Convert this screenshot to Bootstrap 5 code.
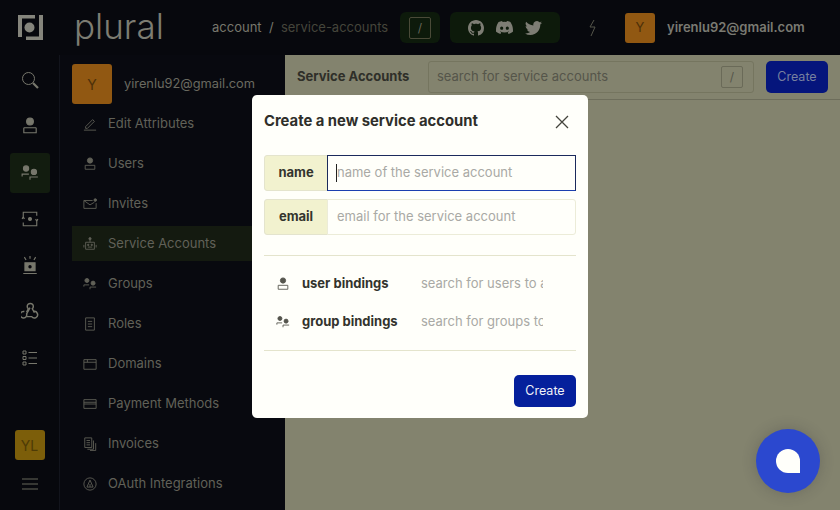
<!DOCTYPE html>
<html lang="en">
<head>
  <meta charset="UTF-8">
  <meta name="viewport" content="width=device-width, initial-scale=1.0">
  <title>Plural - Service Accounts</title>
  <link rel="stylesheet" href="https://cdn.jsdelivr.net/npm/bootstrap@5.3.0/dist/css/bootstrap.min.css">
  <style>
    body { font-family: "Inter", "Liberation Sans", sans-serif; background: #08090f; color: #77776c; overflow: hidden; }
    .app-frame { height: 510px; width: 840px; }
    .top-bar { height: 55px; padding-left: 18px; background: #07080d; }
    .logo-mark { width: 25px; height: 25px; color: #85857c; }
    .logo-word { font-size: 35px; font-weight: 300; line-height: 1; color: #7d7d72; width: 138px; margin-left: 31px; padding-bottom: 3px; }
    .crumbs { font-size: 13px; width: 188px; color: #77776c; white-space: nowrap; }
    .crumb-dim { color: #45453b; }
    .top-pill { background: #0d1a0b; border-radius: 6px; height: 31px; }
    .slash-pill { width: 40px; margin-right: 10px; }
    .social-pill { width: 110px; color: #7d7d74; }
    .slash-key { border: 1px solid #4a4a38; border-radius: 2px; width: 22px; height: 22px; font-size: 12px; color: #66665a; }
    .bolt-box { width: 65px; color: #55554a; }
    .avatar-sq { background: #915812; color: #4d3009; border-radius: 3px; }
    .avatar-top { width: 30px; height: 30px; font-size: 13px; }
    .top-email { font-size: 13px; font-weight: 600; color: #7a7a72; margin-left: 12px; }
    .work-area { height: 455px; }
    .rail { width: 60px; background: #07080d; border-right: 1px solid #12141c; padding-top: 5px; padding-bottom: 20px; }
    .rail-item { width: 40px; height: 40px; margin-bottom: 6.3px; border-radius: 3px; color: #77776c; }
    .rail-item.is-on { background: #121c0f; }
    .rail-yl { width: 30px; height: 30px; background: #7c5e0a; color: #4e3b06; font-size: 14px; border-radius: 3px; margin-bottom: 18px; }
    .side-menu { width: 225px; background: #08090f; }
    .side-head { height: 49px; padding: 9px 0 0 12px; font-size: 12.8px; color: #6a6a60; }
    .avatar-side { width: 40px; height: 40px; font-size: 14px; margin-right: 12px; }
    .side-link { height: 40px; padding-left: 11px; margin-left: 12px; font-size: 13px; color: #616158; }
    .side-link svg { width: 14px; height: 14px; margin-right: 11px; flex: none; }
    .side-link.is-on { background: #141a10; height: 35px; margin-top: 2px; margin-bottom: 3px; }
    .main-pane { background: #83836e; position: relative; }
    .main-head { height: 45px; border-bottom: 1px solid #6d6d5b; padding: 6px 12px 0 12px; }
    .main-title { font-size: 13px; font-weight: 700; color: #2f2f29; width: 131px; height: 32px; }
    .main-search { width: 326px; height: 32px; border: 1px solid #75755f; border-radius: 3px; padding: 0 10px 0 8px; font-size: 13px; color: #55554a; margin-right: 12px; }
    .main-search .slash-key { color: #55554a; border-color: #6a6a58; width: 22px; }
    .btn-navy { background: #05157c; color: #77809f; font-size: 12.5px; width: 62px; height: 32px; padding: 0; border-radius: 5px; border: 0; }
    .dialog-box { position: absolute; left: -33px; top: 40px; width: 336px; height: 323px; border-radius: 5px; background: #fffffa; border: 0; color: #2f2f2a; padding: 0 12px; }
    .dialog-head { height: 53px; font-size: 14.8px; font-weight: 700; margin-bottom: 7px; }
    .dialog-close { color: #44443c; margin-right: 7px; }
    .field-row { height: 36px; margin-bottom: 8px; width: 312px; }
    .field-row .input-group-text { width: 64px; justify-content: center; background: #f2f2cf; border-color: #e4e4cd; font-size: 13px; font-weight: 700; color: #34342e; border-radius: 3px 0 0 3px; padding: 0; }
    .field-row .form-control { background: #fffffa; border-color: #ececd8; font-size: 13px; padding: 0 9px; border-radius: 0 3px 3px 0; box-shadow: none; }
    .field-row .form-control::placeholder { color: #a9a9a5; }
    .field-row .form-control.is-focus { border: 1.5px solid #1b2a5c; border-bottom-color: #1c3fb0; border-radius: 3px; position: relative; z-index: 3; }
    .text-caret { position: absolute; left: 73px; top: 9px; width: 1px; height: 18px; background: #222; z-index: 4; }
    .dialog-rule { border-top: 1px solid #e4e4cc; opacity: 1; margin: 0; }
    .rule-upper { margin: 12px 0 9px; }
    .rule-lower { margin: 9px 0 24px; }
    .binding-row { height: 38px; font-size: 13px; font-weight: 700; color: #33332d; padding-left: 12px; }
    .binding-row svg { width: 14px; height: 14px; margin-right: 12px; color: #55554d; flex: none; }
    .binding-label { width: 119px; white-space: nowrap; }
    .binding-input { width: 122px; outline: none; font-weight: 400; }
    .binding-input::placeholder { color: #a9a9a5; }
    .btn-navy-solid { background: #05209c; color: #f1f2f8; font-size: 12.5px; width: 62px; height: 32px; padding: 0; border-radius: 5px; border: 0; }
    .chat-bubble { position: absolute; left: 756px; top: 429px; width: 64px; height: 64px; border-radius: 50%; background: #2b48cf; box-shadow: 0 0 14px rgba(40,40,50,.25); }
    .chat-dot { width: 24px; height: 24px; background: #fffffa; border-radius: 50% 50% 0 50%; }
  </style>
</head>
<body>
<svg width="0" height="0" class="position-absolute">
  <symbol id="ic-user" viewBox="0 0 16 16" fill="none" stroke="currentColor" stroke-width="1"><circle cx="8" cy="4" r="3" fill="currentColor"/><path d="M2.500 9.500v4.500h11V9.500M2.500 9.500h11"/></symbol>
  <symbol id="ic-group" viewBox="0 0 16 16" fill="none" stroke="currentColor" stroke-width="1"><circle cx="4.500" cy="4" r="2.300" fill="currentColor"/><circle cx="11.500" cy="7" r="2.300" fill="currentColor"/><path d="M1 11V9h6M8 14v-2.500h7"/></symbol>
  <symbol id="ic-pen" viewBox="0 0 16 16" fill="none" stroke="currentColor" stroke-width="1"><path d="M3 11 11 3l2 2-8 8H3zM1 15h14"/></symbol>
  <symbol id="ic-mail" viewBox="0 0 16 16" fill="none" stroke="currentColor" stroke-width="1"><path d="M1 4h10M1 4v9h14V7M1 4l7 5 5-3"/><circle cx="14" cy="3.500" r="1.500" fill="currentColor"/></symbol>
  <symbol id="ic-bot" viewBox="0 0 16 16" fill="none" stroke="currentColor" stroke-width="1"><circle cx="8" cy="2" r="1.300" fill="currentColor"/><path d="M8 3v3M3 6h10v8H3zM1 9v3M15 9v3M5.500 11.500h5"/><circle cx="6" cy="9" r=".8" fill="currentColor"/><circle cx="10" cy="9" r=".8" fill="currentColor"/></symbol>
  <symbol id="ic-doc" viewBox="0 0 16 16" fill="none" stroke="currentColor" stroke-width="1"><path d="M3 1h10v14H3zM5.500 5h5M5.500 8h5M5.500 11h5"/></symbol>
  <symbol id="ic-window" viewBox="0 0 16 16" fill="none" stroke="currentColor" stroke-width="1"><path d="M1 3h14v11H1zM1 6h14M5 3v3"/></symbol>
  <symbol id="ic-card" viewBox="0 0 16 16" fill="none" stroke="currentColor" stroke-width="1"><path d="M1 3h14v10H1zM1 6h14M1 8h14"/></symbol>
  <symbol id="ic-pages" viewBox="0 0 16 16" fill="none" stroke="currentColor" stroke-width="1"><path d="M2 1h8v11H2zM4 4h4M4 6.500h4M4 9h4M12 4v10H5M14.500 7v8.500H8"/></symbol>
  <symbol id="ic-oauth" viewBox="0 0 16 16" fill="none" stroke="currentColor" stroke-width="1"><circle cx="8" cy="8" r="7"/><path d="M8 3.500 4.500 11.500h7zM8 8v3.500"/></symbol>
  <symbol id="ic-git" viewBox="0 0 16 16" fill="currentColor"><path d="M8 0C3.58 0 0 3.58 0 8c0 3.54 2.29 6.53 5.47 7.59.4.07.55-.17.55-.38 0-.19-.01-.82-.01-1.49-2.01.37-2.53-.49-2.69-.94-.09-.23-.48-.94-.82-1.13-.28-.15-.68-.52-.01-.53.63-.01 1.08.58 1.23.82.72 1.21 1.87.87 2.33.66.07-.52.28-.87.51-1.07-1.78-.2-3.64-.89-3.64-3.95 0-.87.31-1.59.82-2.15-.08-.2-.36-1.02.08-2.12 0 0 .67-.21 2.2.82.64-.18 1.32-.27 2-.27.68 0 1.36.09 2 .27 1.53-1.04 2.2-.82 2.2-.82.44 1.1.16 1.92.08 2.12.51.56.82 1.27.82 2.15 0 3.07-1.87 3.75-3.65 3.95.29.25.54.73.54 1.48 0 1.07-.01 1.93-.01 2.2 0 .21.15.46.55.38A8.012 8.012 0 0 0 16 8c0-4.42-3.58-8-8-8z"/></symbol>
  <symbol id="ic-discord" viewBox="0 0 16 16" fill="currentColor"><path d="M13.545 2.907a13.227 13.227 0 0 0-3.257-1.011.05.05 0 0 0-.052.025c-.141.25-.297.577-.406.833a12.19 12.19 0 0 0-3.658 0 8.258 8.258 0 0 0-.412-.833.051.051 0 0 0-.052-.025c-1.125.194-2.22.534-3.257 1.011a.041.041 0 0 0-.021.018C.356 6.024-.213 9.047.066 12.032c.001.014.01.028.021.037a13.276 13.276 0 0 0 3.995 2.02.05.05 0 0 0 .056-.019c.308-.42.582-.863.818-1.329a.05.05 0 0 0-.01-.059.051.051 0 0 0-.018-.011 8.875 8.875 0 0 1-1.248-.595.05.05 0 0 1-.02-.066.051.051 0 0 1 .015-.019c.084-.063.168-.129.248-.195a.05.05 0 0 1 .051-.007c2.619 1.196 5.454 1.196 8.041 0a.052.052 0 0 1 .053.007c.08.066.164.132.248.195a.051.051 0 0 1-.004.085 8.254 8.254 0 0 1-1.249.594.05.05 0 0 0-.03.03.052.052 0 0 0 .003.041c.24.465.515.909.817 1.329a.05.05 0 0 0 .056.019 13.235 13.235 0 0 0 4.001-2.02.049.049 0 0 0 .021-.037c.334-3.451-.559-6.449-2.366-9.106a.034.034 0 0 0-.02-.019Zm-8.198 7.307c-.789 0-1.438-.724-1.438-1.612 0-.889.637-1.613 1.438-1.613.807 0 1.45.73 1.438 1.613 0 .888-.637 1.612-1.438 1.612Zm5.316 0c-.788 0-1.438-.724-1.438-1.612 0-.889.637-1.613 1.438-1.613.807 0 1.451.73 1.438 1.613 0 .888-.631 1.612-1.438 1.612Z"/></symbol>
  <symbol id="ic-twitter" viewBox="0 0 16 16" fill="currentColor"><path d="M5.026 15c6.038 0 9.341-5.003 9.341-9.334 0-.14 0-.282-.006-.422A6.685 6.685 0 0 0 16 3.542a6.658 6.658 0 0 1-1.889.518 3.301 3.301 0 0 0 1.447-1.817 6.533 6.533 0 0 1-2.087.793A3.286 3.286 0 0 0 7.875 6.03a9.325 9.325 0 0 1-6.767-3.429 3.289 3.289 0 0 0 1.018 4.382A3.323 3.323 0 0 1 .64 6.575v.045a3.288 3.288 0 0 0 2.632 3.218 3.203 3.203 0 0 1-.865.115 3.23 3.23 0 0 1-.614-.057 3.283 3.283 0 0 0 3.067 2.277A6.588 6.588 0 0 1 .78 13.58a6.32 6.32 0 0 1-.78-.045A9.344 9.344 0 0 0 5.026 15z"/></symbol>
</svg>

<div class="app-frame d-flex flex-column">
  <div class="top-bar d-flex align-items-center">
    <svg class="logo-mark" viewBox="0 0 25 25" fill="currentColor"><path d="M0 0h17v3.500H4V22H0zM21 0h4v25H8v-3.500h13z"/><circle cx="11.500" cy="12.500" r="5"/></svg>
    <div class="logo-word">plural</div>
    <div class="crumbs">account&nbsp; /&nbsp; <span class="crumb-dim">service-accounts</span></div>
    <div class="top-pill slash-pill d-flex align-items-center justify-content-center"><span class="slash-key d-flex align-items-center justify-content-center">/</span></div>
    <div class="top-pill social-pill d-flex align-items-center justify-content-center gap-2">
      <svg width="16" height="16" class="me-1"><use href="#ic-git"/></svg>
      <svg width="17" height="17" class="me-1"><use href="#ic-discord"/></svg>
      <svg width="17" height="17"><use href="#ic-twitter"/></svg>
    </div>
    <div class="bolt-box d-flex justify-content-center">
      <svg width="10" height="18" viewBox="0 0 10 18" fill="none" stroke="currentColor"><path d="M6 1 2 8h5l-4 9"/></svg>
    </div>
    <div class="avatar-sq avatar-top d-flex align-items-center justify-content-center">Y</div>
    <div class="top-email">yirenlu92@gmail.com</div>
  </div>

  <div class="work-area d-flex">
    <div class="rail d-flex flex-column align-items-center">
      <div class="rail-item d-flex align-items-center justify-content-center"><svg width="18" height="18" viewBox="0 0 18 18" fill="none" stroke="currentColor"><circle cx="7.500" cy="7.500" r="6"/><path d="m12 12 5 5" stroke-width="2.200"/></svg></div>
      <div class="rail-item d-flex align-items-center justify-content-center"><svg width="18" height="18"><use href="#ic-user"/></svg></div>
      <div class="rail-item is-on d-flex align-items-center justify-content-center"><svg width="18" height="18"><use href="#ic-group"/></svg></div>
      <div class="rail-item d-flex align-items-center justify-content-center"><svg width="18" height="18" viewBox="0 0 16 16" fill="none" stroke="currentColor"><path d="M2 6V2h12v3M14 10v4H2v-3M1 8l1-2 1 2M13 8l1 2 1-2"/><circle cx="8" cy="8" r="1.300" fill="currentColor"/></svg></div>
      <div class="rail-item d-flex align-items-center justify-content-center"><svg width="18" height="18" viewBox="0 0 16 16" fill="none" stroke="currentColor"><path d="M8 0v2.500M3 1l1.500 2.500M13 1l-1.500 2.500M2 15.500h12"/><path d="M3.500 6h9v7h-9z" fill="currentColor"/><circle cx="8" cy="9.500" r="1.500" fill="#07080d" stroke="none"/></svg></div>
      <div class="rail-item d-flex align-items-center justify-content-center"><svg width="18" height="18" viewBox="0 0 16 16" fill="none" stroke="currentColor" stroke-width="1.300"><path d="M5 9 6.500 6A2.700 2.700 0 1 1 10 6L12 9.500"/><path d="M11 8.500A2.900 2.900 0 1 1 9.500 13H5"/><path d="M8 5 5 10.500A2.900 2.900 0 1 1 3 8.500"/></svg></div>
      <div class="rail-item d-flex align-items-center justify-content-center"><svg width="16" height="16" viewBox="0 0 16 16" fill="none" stroke="currentColor"><path d="M1 1h3v3H1zM1 6.500h3v3H1zM1 12h3v3H1zM6.500 2.500H15M6.500 8H15M6.500 13.500H15"/></svg></div>
      <div class="rail-yl mt-auto d-flex align-items-center justify-content-center">YL</div>
      <svg width="16" height="12" viewBox="0 0 16 12" fill="none" stroke="#66665a"><path d="M0 1h16M0 6h16M0 11h16"/></svg>
    </div>

    <div class="side-menu">
      <div class="side-head d-flex align-items-center">
        <div class="avatar-sq avatar-side d-flex align-items-center justify-content-center">Y</div>
        <span>yirenlu92@gmail.com</span>
      </div>
      <div class="d-flex flex-column">
        <div class="side-link d-flex align-items-center"><svg><use href="#ic-pen"/></svg>Edit Attributes</div>
        <div class="side-link d-flex align-items-center"><svg><use href="#ic-user"/></svg>Users</div>
        <div class="side-link d-flex align-items-center"><svg><use href="#ic-mail"/></svg>Invites</div>
        <div class="side-link is-on d-flex align-items-center"><svg><use href="#ic-bot"/></svg>Service Accounts</div>
        <div class="side-link d-flex align-items-center"><svg><use href="#ic-group"/></svg>Groups</div>
        <div class="side-link d-flex align-items-center"><svg><use href="#ic-doc"/></svg>Roles</div>
        <div class="side-link d-flex align-items-center"><svg><use href="#ic-window"/></svg>Domains</div>
        <div class="side-link d-flex align-items-center"><svg><use href="#ic-card"/></svg>Payment Methods</div>
        <div class="side-link d-flex align-items-center"><svg><use href="#ic-pages"/></svg>Invoices</div>
        <div class="side-link d-flex align-items-center"><svg><use href="#ic-oauth"/></svg>OAuth Integrations</div>
      </div>
    </div>

    <div class="main-pane flex-grow-1">
      <div class="main-head d-flex align-items-start">
        <div class="main-title d-flex align-items-center">Service Accounts</div>
        <div class="main-search d-flex align-items-center justify-content-between">search for service accounts <span class="slash-key d-flex align-items-center justify-content-center">/</span></div>
        <button class="btn btn-navy">Create</button>
      </div>

      <div class="modal-content dialog-box">
        <div class="dialog-head d-flex align-items-center justify-content-between">
          <span>Create a new service account</span>
          <svg class="dialog-close" width="14" height="14" viewBox="0 0 14 14" stroke="currentColor" stroke-width="1.300"><path d="m1 1 12 12M13 1 1 13"/></svg>
        </div>
        <div class="input-group field-row position-relative">
          <span class="input-group-text">name</span>
          <input class="form-control is-focus" type="text" placeholder="name of the service account">
          <span class="text-caret"></span>
        </div>
        <div class="input-group field-row">
          <span class="input-group-text">email</span>
          <input class="form-control" type="text" placeholder="email for the service account">
        </div>
        <hr class="dialog-rule rule-upper">
        <div class="binding-row d-flex align-items-center">
          <svg><use href="#ic-user"/></svg><span class="binding-label">user bindings</span><input class="binding-input border-0 bg-transparent p-0" type="text" placeholder="search for users to add">
        </div>
        <div class="binding-row d-flex align-items-center">
          <svg><use href="#ic-group"/></svg><span class="binding-label">group bindings</span><input class="binding-input border-0 bg-transparent p-0" type="text" placeholder="search for groups to add">
        </div>
        <hr class="dialog-rule rule-lower">
        <div class="d-flex justify-content-end">
          <button class="btn btn-navy-solid">Create</button>
        </div>
      </div>
    </div>
  </div>
</div>

<div class="chat-bubble d-flex align-items-center justify-content-center"><div class="chat-dot"></div></div>

<script src="https://cdn.jsdelivr.net/npm/bootstrap@5.3.0/dist/js/bootstrap.bundle.min.js"></script>
</body>
</html>
